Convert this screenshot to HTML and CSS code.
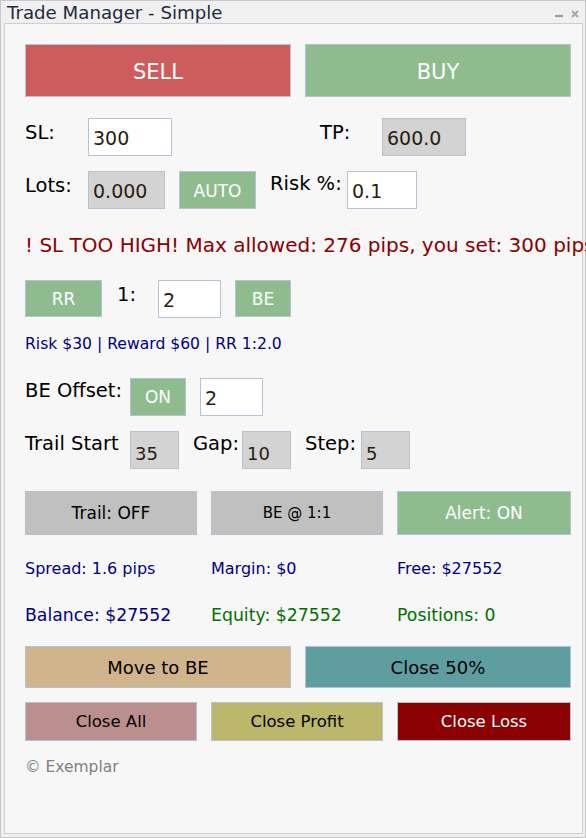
FILE: index.html
```html
<!DOCTYPE html>
<html>
<head>
<meta charset="utf-8">
<link rel="stylesheet" href="styles.css">
</head>
<body>
<div class="window">
  <div class="titlebar">
    <span class="title">Trade Manager - Simple</span>
    <span class="controls">
      <svg width="10" height="10" viewBox="0 0 10 10"><rect x="1" y="6" width="8" height="2" fill="#9a9a9a"/></svg>
      <svg width="10" height="10" viewBox="0 0 10 10"><path d="M2 2 L8 8 M8 2 L2 8" stroke="#a8a8a8" stroke-width="2"/></svg>
    </span>
  </div>
  <div class="panel">
    <div class="row row-trade">
      <div class="btn btn-big sell">SELL</div>
      <div class="btn btn-big buy">BUY</div>
    </div>

    <div class="row row-sl">
      <span class="lbl lbl-sl">SL:</span>
      <div class="inp inp-sl">300</div>
      <span class="lbl lbl-tp">TP:</span>
      <div class="inp inp-tp ro">600.0</div>
    </div>

    <div class="row row-lots">
      <span class="lbl lbl-lots">Lots:</span>
      <div class="inp inp-lots ro">0.000</div>
      <div class="btn btn-auto green">AUTO</div>
      <span class="lbl lbl-risk">Risk %:</span>
      <div class="inp inp-risk">0.1</div>
    </div>

    <div class="error">! SL TOO HIGH! Max allowed: 276 pips, you set: 300 pips</div>

    <div class="row row-rr">
      <div class="btn btn-rr green">RR</div>
      <span class="lbl lbl-one">1:</span>
      <div class="inp inp-rr">2</div>
      <div class="btn btn-be green">BE</div>
    </div>

    <div class="info">Risk $30 | Reward $60 | RR 1:2.0</div>

    <div class="row row-beo">
      <span class="lbl lbl-beo">BE Offset:</span>
      <div class="btn btn-on green">ON</div>
      <div class="inp inp-beo">2</div>
    </div>

    <div class="row row-trail">
      <span class="lbl lbl-trail">Trail Start</span>
      <div class="inp inp-small ro">35</div>
      <span class="lbl lbl-gap">Gap:</span>
      <div class="inp inp-small ro">10</div>
      <span class="lbl lbl-step">Step:</span>
      <div class="inp inp-small ro">5</div>
    </div>

    <div class="row row-toggles">
      <div class="btn btn-third silver">Trail: OFF</div>
      <div class="btn btn-third silver be11">BE @ 1:1</div>
      <div class="btn btn-third green">Alert: ON</div>
    </div>

    <div class="stats stats-1">
      <span class="navy">Spread: 1.6 pips</span>
      <span class="navy">Margin: $0</span>
      <span class="navy">Free: $27552</span>
    </div>

    <div class="stats stats-2">
      <span class="navy">Balance: $27552</span>
      <span class="dgreen">Equity: $27552</span>
      <span class="dgreen">Positions: 0</span>
    </div>

    <div class="row row-manage">
      <div class="btn btn-half tan">Move to BE</div>
      <div class="btn btn-half cadet">Close 50%</div>
    </div>

    <div class="row row-close">
      <div class="btn btn-third2 rosy">Close All</div>
      <div class="btn btn-third2 khaki">Close Profit</div>
      <div class="btn btn-third2 dred">Close Loss</div>
    </div>

    <div class="footer">© Exemplar</div>
  </div>
</div>
</body>
</html>
```

FILE: styles.css
```css
* { box-sizing: border-box; }
html, body { margin: 0; padding: 0; }
body {
  width: 586px;
  height: 838px;
  background: #f0f0f0;
  font-family: "DejaVu Sans", sans-serif;
  overflow: hidden;
}
.window {
  width: 586px;
  height: 838px;
  border: 1px solid #c8c8c8;
  background: #f0f0f0;
  display: flex;
  flex-direction: column;
  padding: 0 2px 3px 3px;
}
.titlebar {
  height: 22px;
  display: flex;
  align-items: center;
  justify-content: space-between;
  padding: 0 3px 0 3px;
}
.title {
  font-size: 18.2px;
  color: #1f2b3b;
}
.controls { display: flex; gap: 6px; align-items: center; padding-top: 3px; }
.panel {
  flex: 1;
  border: 1px solid #cdcdcd;
  background: #f7f7f7;
  padding: 20px 11px 0 20px;
  display: flex;
  flex-direction: column;
}
.row { display: flex; align-items: flex-start; }
.btn {
  display: flex;
  align-items: center;
  justify-content: center;
  border: 1px solid #b4c2d2;
  color: #fff;
  flex-shrink: 0;
}
.inp {
  border: 1px solid #b4c2d2;
  background: #fff;
  color: #2a1c10;
  font-size: 19px;
  display: flex;
  align-items: center;
  padding: 2px 0 0 4px;
  height: 38px;
  flex-shrink: 0;
}
.inp.ro { background: #d3d3d3; }
.lbl { font-size: 19.5px; color: #000; line-height: 1; flex-shrink: 0; white-space: nowrap; }

.green { background: #8fbc8f; }
.silver { background: #c0c0c0; color: #000; }
.tan { background: #d2b48c; color: #000; }
.cadet { background: #5f9ea0; color: #000; }
.rosy { background: #bc8f8f; color: #000; }
.khaki { background: #bdb76b; color: #000; }
.dred { background: #8b0000; color: #fff; }
.sell { background: #cd5c5c; }
.buy { background: #8fbc8f; }

.row-trade { gap: 14px; }
.btn-big { width: 266px; height: 53px; font-size: 21px; padding-top: 2px; }

.row-sl { margin-top: 21px; height: 38px; }
.lbl-sl { width: 63px; padding-top: 5px; }
.inp-sl { width: 84px; }
.lbl-tp { margin-left: 148px; width: 62px; padding-top: 5px; }
.inp-tp { width: 84px; }

.row-lots { margin-top: 15px; }
.lbl-lots { width: 63px; padding-top: 5px; }
.inp-lots { width: 77px; }
.btn-auto { width: 77px; height: 38px; margin-left: 14px; font-size: 17px; padding-top: 2px; }
.lbl-risk { margin-left: 14px; width: 77px; padding-top: 3px; }
.inp-risk { width: 70px; }

.error {
  margin-top: 24px;
  font-size: 20px;
  color: #8b0000;
  white-space: nowrap;
  line-height: 24px;
  height: 24px;
}

.row-rr { margin-top: 23px; }
.btn-rr { width: 77px; height: 37px; font-size: 17px; }
.lbl-one { width: 56px; padding: 5px 0 0 15px; }
.inp-rr { width: 63px; }
.btn-be { width: 56px; height: 37px; margin-left: 14px; font-size: 17px; }

.info {
  margin-top: 17px;
  font-size: 15.6px;
  color: #000080;
  line-height: 18px;
}

.row-beo { margin-top: 25px; }
.lbl-beo { width: 105px; padding-top: 3px; }
.btn-on { width: 56px; height: 38px; font-size: 17px; }
.inp-beo { width: 63px; margin-left: 14px; }

.row-trail { margin-top: 15px; }
.lbl-trail { width: 105px; padding-top: 3px; }
.inp-small { width: 49px; font-size: 18px; padding-top: 6px; }
.lbl-gap { margin-left: 14px; width: 49px; padding-top: 3px; }
.lbl-step { margin-left: 14px; width: 56px; padding-top: 3px; }

.row-toggles { margin-top: 22px; gap: 14px; }
.btn-third { width: 172px; height: 44px; font-size: 17px; }
.btn-third:last-child { width: 174px; color: #fff; }
.be11 { font-size: 15px; }

.stats { display: grid; grid-template-columns: 186px 186px auto; white-space: nowrap; }
.stats-1 { margin-top: 24px; font-size: 16px; line-height: 20px; }
.stats-2 { margin-top: 25px; font-size: 17.3px; line-height: 22px; }
.navy { color: #000080; }
.dgreen { color: #007000; }

.row-manage { margin-top: 20px; gap: 14px; }
.btn-half { width: 266px; height: 42px; font-size: 18px; }

.row-close { margin-top: 14px; gap: 14px; }
.btn-third2 { width: 172px; height: 39px; font-size: 16.5px; }
.btn-third2:last-child { width: 174px; }

.footer {
  margin-top: 16px;
  font-size: 15.5px;
  color: #808080;
  line-height: 20px;
}
```
